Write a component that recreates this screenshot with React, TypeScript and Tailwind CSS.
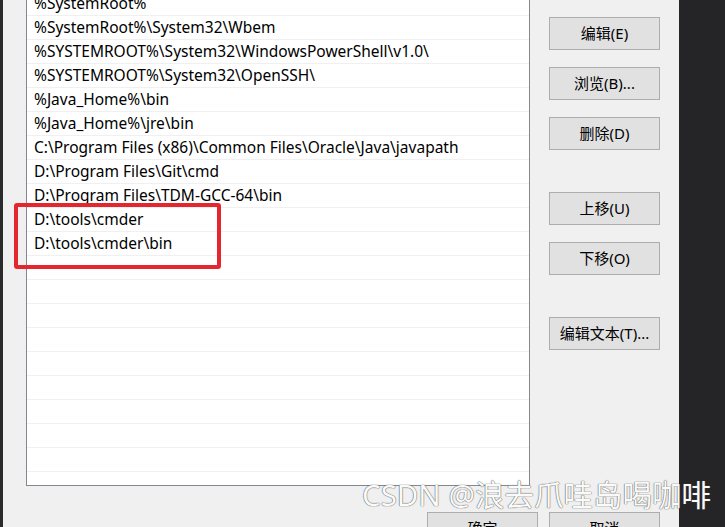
import React from 'react';

const PATHS = [
    '%SystemRoot%',
    '%SystemRoot%\\System32\\Wbem',
    '%SYSTEMROOT%\\System32\\WindowsPowerShell\\v1.0\\',
    '%SYSTEMROOT%\\System32\\OpenSSH\\',
    '%Java_Home%\\bin',
    '%Java_Home%\\jre\\bin',
    'C:\\Program Files (x86)\\Common Files\\Oracle\\Java\\javapath',
    'D:\\Program Files\\Git\\cmd',
    'D:\\Program Files\\TDM-GCC-64\\bin',
    'D:\\tools\\cmder',
    'D:\\tools\\cmder\\bin',
];

// pad with empty rows so the list fills the box
const ROWS = [...PATHS, ...Array(10).fill('')];

const SideButton = ({ label, className = '' }: { label: string; className?: string }) => (
    <button className={`w-[111px] h-[33px] shrink-0 border border-[#adadad] bg-[#e1e1e1] text-[15px] text-black ${className}`}>
        {label}
    </button>
);

const App = () => {
    return (
        <div
            className="relative w-[725px] h-[527px] overflow-hidden flex bg-[#f0f0f0]"
            style={{ fontFamily: '"Noto Sans", "Noto Sans CJK SC", sans-serif' }}
        >
            {/* left edge of the window behind */}
            <div className="w-[3px] bg-[#2b2b2b] shrink-0" />

            {/* Dialog body */}
            <div className="w-[676px] shrink-0 flex flex-col">
                <div className="flex">
                    <div className="ml-[23px] -mt-[9px] w-[504px] h-[495px] border border-[#828790] bg-white overflow-hidden">
                        {ROWS.map((p, i) => (
                            <div
                                key={i}
                                className="h-6 border-b border-[#f0f0f0] pl-[7px] flex items-center text-[15.5px] text-black whitespace-nowrap leading-none"
                            >
                                {p}
                            </div>
                        ))}
                    </div>

                    {/* Right-side buttons */}
                    <div className="flex flex-col pl-[19px] pt-[17px]">
                        <SideButton label="编辑(E)" />
                        <SideButton label="浏览(B)..." className="mt-[17px]" />
                        <SideButton label="删除(D)" className="mt-[17px]" />
                        <SideButton label="上移(U)" className="mt-[42px]" />
                        <SideButton label="下移(O)" className="mt-[17px]" />
                        <SideButton label="编辑文本(T)..." className="mt-[42px]" />
                    </div>
                </div>

                {/* OK / Cancel */}
                <div className="flex justify-end gap-[11px] pr-[19px] mt-[26px]">
                    <SideButton label="确定" />
                    <SideButton label="取消" />
                </div>
            </div>

            {/* dark desktop area on the right */}
            <div className="flex-1 bg-[#252528]" />

            {/* red highlight box */}
            <div className="absolute left-[14px] top-[203px] w-[207px] h-[66px] border-4 border-[#e4262e] rounded-[3px]" />

            {/* watermark */}
            <div className="absolute left-[362px] top-[480px] text-[29.5px] leading-none text-[#fafafa] whitespace-nowrap [text-shadow:0_0_1px_#555,0_0_1px_#555]">
                CSDN @浪去爪哇岛喝咖啡
            </div>
        </div>
    );
};

export default App;
